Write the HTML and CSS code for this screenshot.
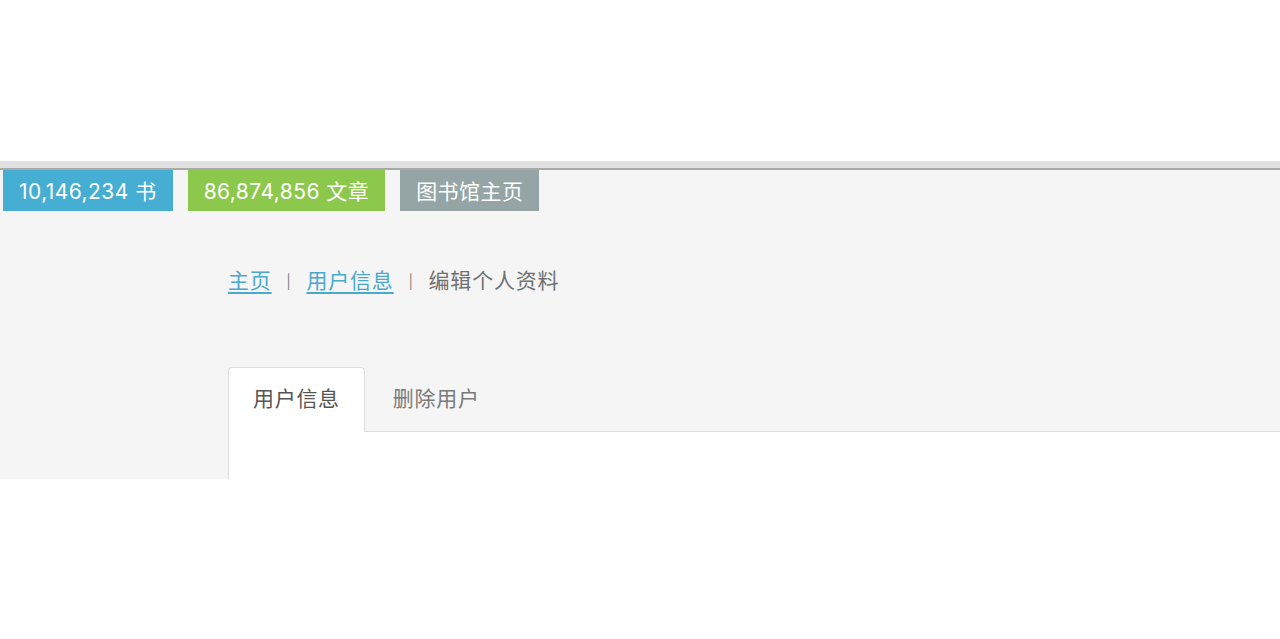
FILE: index.html
```html
<!DOCTYPE html>
<html lang="zh-CN">
<head>
<meta charset="utf-8">
<title>编辑个人资料</title>
<link rel="stylesheet" href="styles.css">
</head>
<body>
<div class="top"></div>
<div class="strip"></div>
<div class="main">
  <div class="stats">
    <span class="badge badge-blue">10,146,234 书</span>
    <span class="badge badge-green">86,874,856 文章</span>
    <span class="badge badge-gray">图书馆主页</span>
  </div>
  <div class="content">
    <nav class="crumbs">
      <a class="crumb-link" href="#">主页</a>
      <span class="sep">|</span>
      <a class="crumb-link" href="#">用户信息</a>
      <span class="sep">|</span>
      <span class="crumb-current">编辑个人资料</span>
    </nav>
    <div class="tabs">
      <span class="tab tab-active">用户信息</span>
      <span class="tab">删除用户</span>
    </div>
    <div class="panel"></div>
  </div>
</div>
</body>
</html>
```
FILE: styles.css
```css
html, body {
  margin: 0;
  padding: 0;
  background: #ffffff;
}
body {
  font-family: Inter, "Noto Sans CJK SC", sans-serif;
}
.top {
  height: 161px;
  background: #ffffff;
}
.strip {
  height: 7px;
  background: #e1e1e1;
  border-bottom: 2px solid #a9a9a9;
}
.main {
  height: 309px;
  overflow: hidden;
  background: #f5f5f5;
  display: flex;
  flex-direction: column;
}
.stats {
  display: flex;
  gap: 15px;
  padding-left: 3px;
}
.badge {
  height: 41px;
  display: flex;
  align-items: center;
  padding: 0 16px 2px;
  color: #ffffff;
  font-size: 21px;
  letter-spacing: 0.45px;
  font-family: Inter, "Noto Sans CJK SC", sans-serif;
  box-sizing: border-box;
}
.badge-blue { background: #46aed3; }
.badge-green { background: #8cc84c; }
.badge-gray { background: #95a5a6; }
.content {
  padding-left: 228px;
  display: flex;
  flex-direction: column;
  flex: 1;
}
.crumbs {
  margin-top: 53px;
  height: 30px;
  display: flex;
  align-items: center;
  font-size: 21px;
  letter-spacing: 0.8px;
  font-family: "Noto Sans CJK SC", sans-serif;
}
.crumb-link {
  color: #4aa9cb;
  text-decoration: underline;
  text-underline-offset: 4px;
}
.sep {
  color: #7c7c7c;
  font-size: 15px;
  padding: 0 15px;
}
.crumb-current {
  color: #707070;
}
.tabs {
  margin-top: 73px;
  display: flex;
  border-bottom: 1px solid #dddddd;
  height: 64px;
  font-family: "Noto Sans CJK SC", sans-serif;
  font-size: 21px;
  letter-spacing: 0.7px;
}
.tab {
  display: flex;
  align-items: center;
  padding: 0 25px 6px 27px;
  color: #7a7a7a;
  border: 1px solid transparent;
  border-bottom: none;
}
.tab-active {
  padding: 0 24px 6px;
  color: #555555;
  background: #ffffff;
  border-color: #dddddd;
  border-radius: 4px 4px 0 0;
  margin-bottom: -1px;
}
.panel {
  flex: 1;
  background: #ffffff;
  border-left: 1px solid #dddddd;
}
```
